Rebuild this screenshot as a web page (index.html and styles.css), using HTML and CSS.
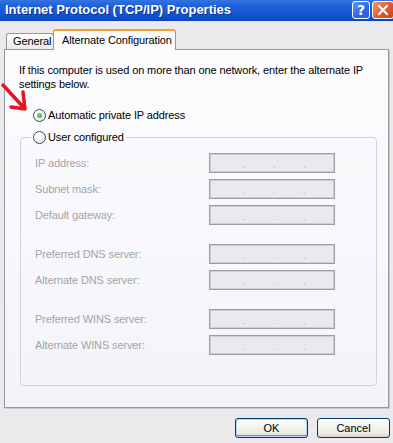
FILE: index.html
```html
<!DOCTYPE html>
<html>
	<head>
		<meta charset="utf-8">
		<title>Internet Protocol (TCP/IP) Properties</title>
		<link rel="stylesheet" href="styles.css">
	</head>
	<body>
		<div class="titlebar">
			<span class="caption">Internet Protocol (TCP/IP) Properties</span>
			<span class="tbtn help">?</span>
			<span class="tbtn close">
				<svg width="20" height="16" viewBox="0 0 20 16"><path d="M6 4 L14 12 M14 4 L6 12" stroke="#fff" stroke-width="2" stroke-linecap="square" fill="none" /></svg>
			</span>
		</div>
		<div class="tabs">
			<span class="tab">General</span>
			<span class="tab active">Alternate Configuration</span>
		</div>
		<div class="panel">
			<!-- red annotation arrow drawn over the page -->
			<svg class="arrow" width="32" height="36" viewBox="0 0 32 36">
				<path d="M3 5 L25 29 M23 12 L25 29 L11 27" stroke="#e3151d" stroke-width="3.5" stroke-linecap="round" stroke-linejoin="round" fill="none" />
			</svg>
			<p class="intro">If this computer is used on more than one network, enter the alternate IP<br />settings below.</p>
			<label class="radio"><span class="dot on"></span>Automatic private IP address</label>
			<fieldset class="group">
				<legend><label class="radio"><span class="dot"></span>User configured</label></legend>
				<div class="fields">
					<span class="label">IP address:</span>
					<span class="ip"><i>.</i><i>.</i><i>.</i></span>
					<span class="label">Subnet mask:</span>
					<span class="ip"><i>.</i><i>.</i><i>.</i></span>
					<span class="label">Default gateway:</span>
					<span class="ip"><i>.</i><i>.</i><i>.</i></span>
					<span class="label">Preferred DNS server:</span>
					<span class="ip"><i>.</i><i>.</i><i>.</i></span>
					<span class="label">Alternate DNS server:</span>
					<span class="ip"><i>.</i><i>.</i><i>.</i></span>
					<span class="label">Preferred WINS server:</span>
					<span class="ip"><i>.</i><i>.</i><i>.</i></span>
					<span class="label">Alternate WINS server:</span>
					<span class="ip"><i>.</i><i>.</i><i>.</i></span>
				</div>
			</fieldset>
		</div>
		<div class="buttons">
			<button type="button" class="btn default">OK</button>
			<button type="button" class="btn">Cancel</button>
		</div>
	</body>
</html>
```

FILE: styles.css
```css
html,
body {
	margin: 0;
}
body {
	width: 393px;
	height: 443px;
	overflow: hidden;
	background-color: #ebe9ec;
	font-family: "Liberation Sans", Arial, sans-serif;
	font-size: 11px;
	letter-spacing: -0.12px;
	color: #000;
}
.titlebar {
	display: flex;
	align-items: flex-start;
	height: 21px;
	overflow: hidden;
	background: linear-gradient(#3474e0 0%, #1f63da 25%, #1659d6 55%, #0f4ecb 85%, #0944bb 100%);
}
.caption {
	flex: 1;
	padding-left: 5px;
	line-height: 20px;
	font-weight: bold;
	font-size: 13px;
	letter-spacing: 0;
	color: white;
	white-space: nowrap;
	text-shadow: 1px 1px 0 #0b2f8a;
}
.tbtn {
	box-sizing: border-box;
	display: flex;
	align-items: center;
	justify-content: center;
	height: 18px;
	margin-top: 1px;
	border: 1px solid #fff;
	border-radius: 3px;
}
.help {
	width: 18px;
	margin-right: 2px;
	background: linear-gradient(135deg, #5d97f7, #2b66e2 60%, #2a5fd6);
	color: white;
	font-weight: bold;
	font-size: 14px;
	font-family: "DejaVu Sans", sans-serif;
}
.close {
	width: 22px;
	margin-right: -1px;
	background: linear-gradient(135deg, #ee9a75, #dd5a2e 55%, #c9451e);
}
.tabs {
	display: flex;
	align-items: flex-end;
	height: 20px;
	margin: 8px 0 0 6px;
}
.tab {
	box-sizing: border-box;
	height: 16px;
	width: 48px;
	padding-left: 6px;
	line-height: 15px;
	border: 1px solid #919b9c;
	border-bottom: 0;
	border-radius: 3px 3px 0 0;
	background: linear-gradient(#fefefe, #ecebe7);
	white-space: nowrap;
}
.tab.active {
	position: relative;
	z-index: 1;
	width: 123px;
	height: 21px;
	margin-left: -1px;
	margin-bottom: -1px;
	padding-left: 8px;
	line-height: 18px;
	border-top: 2px solid #f1a33a;
	background: #fcfcfe;
}
.panel {
	position: relative;
	box-sizing: border-box;
	width: 385px;
	height: 359px;
	margin-left: 4px;
	padding: 13px 14px 0;
	border: 1px solid #919b9c;
	background: linear-gradient(#fcfcfe, #f3f4fa);
	box-shadow: 1px 1px 0 #c9c9cd;
}
.arrow {
	position: absolute;
	left: -5px;
	top: 30px;
}
.intro {
	margin: 0;
	line-height: 14px;
}
.radio {
	display: flex;
	align-items: center;
	height: 14px;
	white-space: nowrap;
}
.panel > .radio {
	margin-top: 17px;
	padding-left: 14px;
}
.dot {
	box-sizing: border-box;
	display: flex;
	align-items: center;
	justify-content: center;
	width: 13px;
	height: 13px;
	margin-right: 2px;
	border: 1px solid #2f4c69;
	border-radius: 50%;
	background: radial-gradient(circle at 35% 35%, #ffffff 30%, #dcdcd8 100%);
}
.dot.on::after {
	content: "";
	width: 5px;
	height: 5px;
	border-radius: 50%;
	background: radial-gradient(circle at 40% 40%, #7ee07e, #22a022);
}
.group {
	box-sizing: border-box;
	width: 357px;
	margin: 8px 0 0 1px;
	padding: 0 0 30px;
	border: 1px solid #d3d3d9;
	border-radius: 4px;
}
.group legend {
	margin-left: 10px;
	padding: 0 2px;
}
.fields {
	display: grid;
	grid-template-columns: 174px 126px;
	grid-template-rows: 20px 20px 20px 33px 20px 33px 20px;
	row-gap: 6px;
	margin-top: 9px;
	padding-left: 14px;
}
.label {
	align-self: end;
	line-height: 20px;
	color: #a4a4a6;
	white-space: nowrap;
}
.ip {
	align-self: end;
	box-sizing: border-box;
	display: flex;
	align-items: flex-end;
	gap: 28px;
	height: 20px;
	padding: 0 0 3px 33px;
	border: 1px solid #9d9d9f;
	box-shadow: inset 0 0 0 1px #cfcfd1;
	background-color: #ebe9ed;
}
.ip i {
	width: 2px;
	font-style: normal;
	line-height: 10px;
	color: #bdbdbf;
}
.buttons {
	display: flex;
	justify-content: flex-end;
	gap: 9px;
	margin-top: 10px;
	padding-right: 3px;
}
.btn {
	box-sizing: border-box;
	width: 73px;
	height: 20px;
	padding: 0;
	border: 1px solid #003c74;
	border-radius: 3px;
	background: linear-gradient(#ffffff, #f4f3ee 40%, #ebeae3 80%, #d6d0c5);
	font-family: "Liberation Sans", Arial, sans-serif;
	font-size: 11px;
	color: #000;
}
.btn.default {
	box-shadow: inset 0 0 0 1px #b9d1f6, inset 0 -1px 0 1px #6f8ee8;
}
```
